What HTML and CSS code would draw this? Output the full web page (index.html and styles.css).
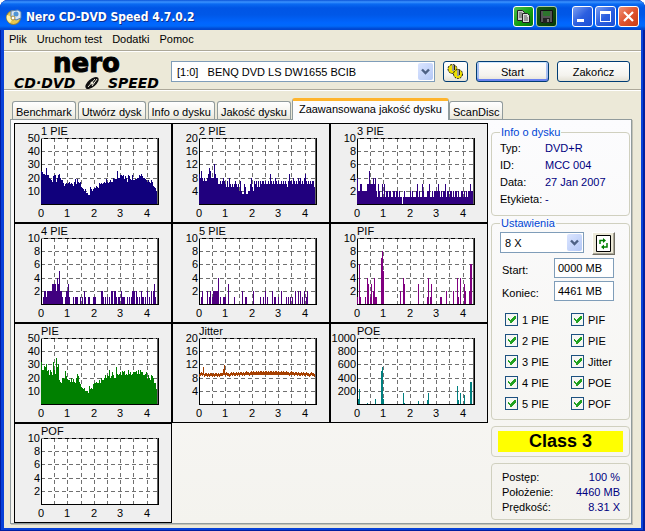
FILE: index.html
```html
<!DOCTYPE html>
<html lang="pl">
<head>
<meta charset="utf-8">
<title>Nero CD-DVD Speed 4.7.0.2</title>
<link rel="stylesheet" href="styles.css">
</head>
<body>
<div class="window">
  <header class="titlebar">
    <svg class="app-icon" width="16" height="16" viewBox="0 0 16 16" aria-hidden="true">
      <circle cx="7.5" cy="8.5" r="7" fill="#e9c94d" stroke="#8b7a35"/>
      <path d="M7.500 8.500L1 6a7 7 0 0 0 3 8z" fill="#fff3a8"/>
      <path d="M5 2l7-1 3 2v6l-5 2-5-3z" fill="#dbe7f2" stroke="#527fb5"/>
      <circle cx="10" cy="5" r="2.500" fill="#4f94d5"/>
      <circle cx="7" cy="9" r="2" fill="#fff" stroke="#a38833"/>
    </svg>
    <h1 class="title">Nero CD-DVD Speed 4.7.0.2</h1>
    <div class="caption-group">
      <button class="caption green" aria-label="Kopiuj"><svg width="19" height="19" viewBox="0 0 19 19"><path d="M3.500 3.500h5l2 2v8h-7z" fill="#c8c8c8" stroke="#222"/><path d="M5 6h3M5 8h3M5 10h3" stroke="#555"/><path d="M8.500 6.500h5l2 2v7h-7z" fill="#ddd" stroke="#222"/><path d="M10 9h3M10 11h4M10 13h4" stroke="#555"/></svg></button>
      <button class="caption green dark" aria-label="Zapisz"><svg width="19" height="19" viewBox="0 0 19 19"><path d="M3.500 3.500h12v12h-11l-1-1z" fill="#555" stroke="#111"/><path d="M6 4h7v5H6z" fill="#2d742d"/><path d="M6 11h7v5H6z" fill="#222"/><path d="M10 12h2v3h-2z" fill="#777"/></svg></button>
    </div>
    <div class="caption-group">
      <button class="caption" aria-label="Minimalizuj"><svg width="19" height="19" viewBox="0 0 19 19"><path d="M4 12h7v3H4z" fill="#fff"/></svg></button>
      <button class="caption" aria-label="Maksymalizuj"><svg width="19" height="19" viewBox="0 0 19 19"><path d="M4 4h11v11H4zM5 7v7h9V7z" fill="#fff" fill-rule="evenodd"/></svg></button>
      <button class="caption close" aria-label="Zamknij"><svg width="19" height="19" viewBox="0 0 19 19"><path d="M5 5l9 9M14 5l-9 9" stroke="#fff" stroke-width="2.200"/></svg></button>
    </div>
  </header>

  <div class="client">
    <nav class="menu">
      <a href="#plik">Plik</a><a href="#test">Uruchom test</a><a href="#dodatki">Dodatki</a><a href="#pomoc">Pomoc</a>
    </nav>

    <div class="toolbar">
      <div class="logo">
        <span class="logo-name">nero</span>
        <span class="logo-product"><span>CD·DVD</span>
          <svg width="18" height="12" viewBox="0 0 18 12" aria-hidden="true"><ellipse cx="9" cy="6" rx="8" ry="4" transform="rotate(-40 9 6)" fill="#111"/><path d="M5 10L12 2M9 9l5-7" stroke="#ece9d8"/><circle cx="9" cy="6" r="1.500" fill="#ece9d8"/></svg>
          <span>SPEED</span></span>
      </div>
      <div class="combo drive">
        <select aria-label="Napęd"><option>[1:0] &nbsp; BENQ DVD LS DW1655 BCIB</option></select>
        <svg class="arrow" viewBox="0 0 15 17" aria-hidden="true"><path d="M4 6.500l3.500 3.500L11 6.500" fill="none" stroke="#4d6185" stroke-width="2.400"/></svg>
      </div>
      <button class="push icon" aria-label="Opcje"><svg width="17" height="17" viewBox="0 0 17 17"><circle cx="5.500" cy="6" r="4.500" fill="#eee000" stroke="#111" stroke-dasharray="2 1"/><circle cx="11" cy="11" r="4.500" fill="#eee000" stroke="#111" stroke-dasharray="2 1"/><path d="M6 2v6M11 7v6" stroke="#999" stroke-width="2"/><path d="M7.500 2v5M12.500 7v5" stroke="#222"/></svg></button>
      <button class="push default">Start</button>
      <button class="push">Zakończ</button>
    </div>

    <div class="tabs" role="tablist">
      <button class="tab" role="tab">Benchmark</button>
      <button class="tab" role="tab">Utwórz dysk</button>
      <button class="tab" role="tab">Info o dysku</button>
      <button class="tab" role="tab">Jakość dysku</button>
      <button class="tab active" role="tab" aria-selected="true">Zaawansowana jakość dysku</button>
      <button class="tab" role="tab">ScanDisc</button>
    </div>

    <main class="panel">
      <div class="charts" id="charts"></div>
      <aside class="side">
        <fieldset class="group info">
          <legend>Info o dysku</legend>
          <dl>
            <dt>Typ:</dt><dd>DVD+R</dd>
            <dt>ID:</dt><dd>MCC 004</dd>
            <dt>Data:</dt><dd>27 Jan 2007</dd>
            <dt>Etykieta:</dt><dd>-</dd>
          </dl>
        </fieldset>
        <fieldset class="group settings">
          <legend>Ustawienia</legend>
          <div class="speed-row">
            <div class="combo speed">
              <select aria-label="Prędkość"><option>8 X</option></select>
              <svg class="arrow" viewBox="0 0 15 17" aria-hidden="true"><path d="M4 6.500l3.500 3.500L11 6.500" fill="none" stroke="#4d6185" stroke-width="2.400"/></svg>
            </div>
            <button class="refresh" aria-label="Odśwież"><svg width="15" height="17" viewBox="0 0 15 17"><path d="M.5.5h14v16H.5z" fill="#fff" stroke="#000"/><path d="M4 9V5.500h3M11 8v4H8" fill="none" stroke="#008000" stroke-width="1.500"/><path d="M7 3l3 2.500L7 8zM8 9.500L5 12l3 2.500z" fill="#008000"/></svg></button>
          </div>
          <div class="range">
            <label for="from">Start:</label><input id="from" type="text" value="0000 MB">
            <label for="to">Koniec:</label><input id="to" type="text" value="4461 MB">
          </div>
          <div class="checks">
            <label><input type="checkbox" checked>1 PIE</label><label><input type="checkbox" checked>PIF</label>
            <label><input type="checkbox" checked>2 PIE</label><label><input type="checkbox" checked>PIE</label>
            <label><input type="checkbox" checked>3 PIE</label><label><input type="checkbox" checked>Jitter</label>
            <label><input type="checkbox" checked>4 PIE</label><label><input type="checkbox" checked>POE</label>
            <label><input type="checkbox" checked>5 PIE</label><label><input type="checkbox" checked>POF</label>
          </div>
        </fieldset>
        <div class="group grade"><strong>Class 3</strong></div>
        <dl class="group status">
          <dt>Postęp:</dt><dd>100 %</dd>
          <dt>Położenie:</dt><dd>4460 MB</dd>
          <dt>Prędkość:</dt><dd>8.31 X</dd>
        </dl>
      </aside>
    </main>
  </div>
</div>
<script src="charts.js"></script>
</body>
</html>
```
FILE: styles.css
```css
* { box-sizing: border-box; }

body {
  margin: 0;
  background: #fff;
  color: #000;
  font: 11px/14px "Liberation Sans", Arial, sans-serif;
}

button, select, input { font: inherit; color: inherit; margin: 0; }
dl, dd, h1 { margin: 0; }

.window {
  display: flex;
  flex-direction: column;
  min-height: 100vh;
  padding: 0 4px 4px;
  border-radius: 8px 8px 0 0;
  background: #0842d8;
  box-shadow: inset 1px 0 #001ea0, inset -2px 0 #001ea0, inset 0 -2px #001ea0;
}

.titlebar {
  display: flex;
  align-items: center;
  gap: 12px;
  height: 30px;
  margin: 0 -4px;
  padding: 3px 6px 0;
  border-radius: 8px 8px 0 0;
  background: linear-gradient(#0a53d8 0, #3b93ff 2px, #0a6af2 4px, #0055e5 8px, #0058e8 15px, #0066ff 23px, #0069fa 26px, #0046cf 29px);
}

.app-icon { margin-right: -8px; }

.title {
  flex: 1;
  color: #fff;
  font: bold 12px/20px "DejaVu Sans Condensed", "Open Sans", sans-serif;
  text-shadow: 1px 1px #0b2f90;
  white-space: nowrap;
}

.caption-group { display: flex; gap: 2px; margin-left: 3px; }

.caption {
  width: 21px;
  height: 21px;
  padding: 0;
  border: 1px solid #fff;
  border-radius: 3px;
  background: linear-gradient(135deg, #7c9ff0, #2c5fe0 50%, #1b50d5);
}
.caption svg { display: block; }
.caption.green { background: linear-gradient(135deg, #4fc04f, #109c10 60%, #087808); }
.caption.green.dark { border-color: #a8c8a8; background: linear-gradient(135deg, #155c15, #053905); }
.caption.close { background: linear-gradient(135deg, #ef9277, #e0532f 50%, #c83d14); }

.client {
  flex: 1;
  display: flex;
  flex-direction: column;
  background: #ece9d8;
}

.menu {
  display: flex;
  gap: 10px;
  height: 21px;
  padding: 2px 5px 0;
  border-bottom: 1px solid #aca899;
}
.menu a { color: #000; text-decoration: none; }

.toolbar {
  display: flex;
  align-items: center;
  gap: 8px;
  height: 39px;
  padding: 2px 11px 0 10px;
  border-top: 1px solid #fff;
  border-bottom: 1px solid #aca899;
  box-shadow: 0 1px #fff;
}

.logo { width: 145px; margin-right: 4px; color: #000; }
.logo-name {
  display: block;
  height: 23px;
  text-align: center;
  font: bold 26px/18px "DejaVu Sans", sans-serif;
  -webkit-text-stroke: 1px #000;
}
.logo-product {
  display: flex;
  align-items: center;
  justify-content: space-between;
  font: italic bold 14px/12px "DejaVu Sans", sans-serif;
}

.combo {
  position: relative;
  display: flex;
  height: 21px;
  border: 1px solid #7f9db9;
  background: #fff;
}
.combo.drive { flex: 1; }
.combo.speed { width: 84px; }
.combo select {
  appearance: none;
  flex: 1;
  min-width: 0;
  padding: 0 20px 0 5px;
  border: 0;
  background: transparent;
}
.combo.speed select { padding-left: 4px; }
.arrow {
  position: absolute;
  top: 1px;
  right: 1px;
  width: 15px;
  height: 17px;
  border-radius: 2px;
  background: linear-gradient(135deg, #dbe5ff, #b4c8f6);
  pointer-events: none;
}

.push {
  width: 73px;
  height: 21px;
  padding: 0;
  border: 1px solid #003c74;
  border-radius: 3px;
  background: linear-gradient(#fff, #f4f3ee 70%, #e4e1d5);
}
.push.default { box-shadow: inset 0 1px #cee7ff, inset 0 -2px #6982ee, inset 2px 0 #a7bff1, inset -2px 0 #a7bff1; }
.push.icon { width: 25px; }
.push.icon svg { display: block; margin: 0 auto; }

.tabs {
  display: flex;
  align-items: flex-end;
  gap: 2px;
  height: 29px;
  padding: 0 8px;
}
.tab {
  height: 18px;
  padding: 2px 3px 0;
  border: 1px solid #919b9c;
  border-bottom: 0;
  border-radius: 3px 3px 0 0;
  background: linear-gradient(#fff, #f2f1ea 70%, #e6e3d6);
  line-height: 14px;
  white-space: nowrap;
}
.tab.active {
  position: relative;
  height: 22px;
  margin: 0 -2px -1px -1px;
  padding: 0 6px 4px;
  border-top: 3px solid #ffb42c;
  background: #fcfcfe;
}

.panel {
  flex: 1;
  display: flex;
  gap: 3px;
  margin: 0 9px 4px 6px;
  padding: 3px 1px 0 3px;
  border: 1px solid #919b9c;
  box-shadow: 1px 1px #c4c2b6;
  background: linear-gradient(#fcfcfe, #f4f3ee);
}

.charts {
  flex: 1;
  display: grid;
  grid-template-columns: repeat(3, 158px);
  align-content: start;
}
.chart { display: block; width: 158px; height: 100px; border: 1px solid #000; background: #efefef; }
.chart text { font: 11px "Liberation Sans", Arial, sans-serif; }
.chart .tick { text-anchor: end; }
.chart .unit { text-anchor: middle; }

.side { width: 140px; padding-top: 3px; }

.group {
  margin: 0;
  padding: 0 8px;
  border: 1px solid #d0d0bf;
  border-radius: 4px;
}
.group legend { padding: 0 1px; color: #0046d5; line-height: 12px; }

.info dl {
  display: grid;
  grid-template-columns: 45px 1fr;
  padding: 2px 0 7px;
  line-height: 17px;
}
.info dd, .status dd { color: #000080; }

.settings { margin-top: 1px; }
.speed-row { display: flex; gap: 8px; padding-top: 3px; }
.refresh {
  width: 23px;
  height: 23px;
  padding: 2px 3px;
  border: 1px solid;
  border-color: #fff #716f64 #716f64 #fff;
  background: #ece9d8;
  box-shadow: inset -1px -1px #aca899;
}
.refresh svg { display: block; }

.range {
  display: grid;
  grid-template-columns: 52px 60px;
  row-gap: 3px;
  align-items: center;
  padding: 3px 0 0 2px;
}
.range label { padding-top: 4px; }
.range input {
  width: 60px;
  height: 20px;
  padding: 0 3px;
  border: 1px solid #7f9db9;
  background: #fff;
}

.checks {
  display: grid;
  grid-template-columns: 66px 1fr;
  padding: 8px 0 5px 5px;
}
.checks label { display: flex; align-items: center; gap: 4px; height: 21px; }
.checks input {
  appearance: none;
  width: 13px;
  height: 13px;
  border: 1px solid #1c5180;
  background: linear-gradient(135deg, #dcdcd7, #fff);
}
.checks input:checked {
  background:
    linear-gradient(45deg, transparent 35%, #21a121 35% 65%, transparent 65%) 2px 4px / 4px 5px no-repeat,
    linear-gradient(135deg, transparent 35%, #21a121 35% 65%, transparent 65%) 4px 2px / 6px 7px no-repeat,
    #f6f6f4;
}

.grade { margin-top: 6px; padding: 4px 6px; }
.grade strong {
  display: block;
  background: #ff0;
  font-size: 18px;
  line-height: 21px;
  text-align: center;
}

.status {
  display: grid;
  grid-template-columns: 1fr auto;
  margin-top: 6px;
  padding: 6px 9px 4px 10px;
  line-height: 15px;
}
.status dd { text-align: right; }
```
FILE: charts.js
```js
// Plot geometry inside a 156x98 chart; one sample is one pixel wide.
const LEFT = 26, TOP = 14, WIDTH = 118, HEIGHT = 66, STEP = 13.2, END = 116;

const parse = s => s.trim().split(/\s+/).map(Number);

// Expands [position, value, width] entries over an empty baseline.
const sparse = list => {
  const out = new Array(END).fill(0);
  list.forEach(([x, v, w = 1]) => out.fill(v, x, x + w));
  return out;
};

const pie1 = parse(`25 24 23 23 22 27 22 22 20 19 18 17 21 22 22 17 20 22 23 20
 18 18 16 14 15 16 15 16 17 15 16 15 14 17 19 15 19 17 16 17 13 12 11 10 11 8 8 7
 7 13 11 10 11 12 12 14 13 12 16 15 16 15 16 17 16 19 17 16 17 18 17 17 20 19 19 19 25
 20 20 22 22 21 22 19 21 20 17 22 21 19 18 22 18 18 19 19 20 20 22 21 23 21 20 20 19
 18 17 18 17 16 18 17 14 13 12 10`);
const pie2 = parse(`9 8 10 8 7 8 7 7 8 9 11 10 8 8 8 12 9 8 8 6 6 7 6 7 8 7 6 5
 7 5 8 6 5 6 5 6 7 6 5 6 4 7 4 3 3 6 5 3 3 4 4 6 8 5 4 7 6 7 5 7 5 7
 6 7 7 6 7 6 6 7 6 9 7 6 7 6 8 7 6 7 6 6 7 6 7 6 7 6 5 7 9 7
 7 6 8 7 6 7 6 8 7 8 6 7 6 8 9 7 6 7 6 7 6 7 7 5 5`);
const pie3 = parse(`4 2 2 3 3 2 2 2 2 2 3 3 5 3 3 3 4 3 4 2 1 3 2 1 1 3 1 3
 1 2 2 1 2 2 1 1 2 2 1 2 2 1 2 1 1 0 1 2 1 1 1 1 1 2 1 2 1 1 1 2 3 1 2
 1 1 3 2 1 1 1 2 2 3 1 1 2 1 2 2 2 2 3 2 1 2 1 2 2 3 1 2 2 1 2 2 1 2 1
 2 2 1 2 1 1 2 2 1 2 1 2 1 2 2 3 2 2`);
const pie = parse(`32 26 26 29 28 30 25 26 22 26 24 22 32 26 23 35 28 30 18 17
 16 20 20 19 25 21 19 18 18 17 20 17 19 17 16 20 23 21 17 15 13 12 11 12 10 10 10 8
 14 11 12 11 15 16 16 17 16 16 18 16 20 18 18 20 22 20 22 21 26 20 21 24 22 20 20 28 23
 22 23 24 22 25 24 25 22 23 22 26 23 24 22 23 24 24 24 25 23 26 23 26 24 24 22 22 23
 24 19 22 20 18 22 21 20 16 16 11`);
const pie4 = sparse([[2,1],[3,2,2],[5,1],[6,2,6],[11,3,4],[15,2],[16,4],[17,3],[18,5],[19,2,2],
 [21,1],[24,1],[25,2,2],[27,3],[28,1],[32,1],[34,1,3],[39,1],[41,1],[43,2],[44,1],[47,1,2],
 [52,1,3],[60,2,2],[62,1],[64,1],[66,1],[68,1],[70,2,2],[73,2,2],[75,1],[77,1,2],[80,2],
 [81,1,3],[86,1],[88,1],[90,1],[91,2,2],[93,2],[95,2],[96,1],[98,1],[100,2],[101,1,2],[104,1],
 [106,2],[108,1],[110,2],[112,2],[113,3],[114,1]]);
const pie5 = sparse([[2,1],[3,2],[8,2],[10,1],[11,2],[13,1],[14,2,5],[19,4],[21,1],[24,1,3],
 [29,3],[35,1],[43,2],[46,1,2],[54,2],[61,1],[64,1],[66,2],[68,1],[73,2],[75,1],[76,1],[79,1],
 [82,2],[87,1],[89,1],[91,1],[93,1],[96,2],[99,2],[101,2],[103,1],[105,2],[107,1],[108,2]]);
const pif = sparse([[0,1],[2,6],[3,1],[8,1],[10,4],[11,3],[13,1],[14,3],[16,2],[17,4],[18,1,2],
 [24,7],[25,8],[26,5],[43,2],[46,4],[47,3],[61,3],[70,1],[71,4],[73,1],[74,3],[83,1,2],[89,2],
 [96,2],[100,4],[101,1],[103,4],[107,3],[108,2],[112,2],[113,6,2]]);
const poe = sparse([[1,80],[2,220],[10,20],[18,80],[24,500],[25,560],[26,80],[46,160],[47,20],
 [61,50],[70,60],[71,160],[100,270],[101,60],[103,160],[107,130],[113,330],[114,340]]);

const jitter = Array.from({ length: END }, (_, i) => {
  if (i === 4) return 11.2;
  if (i === 24) return 10.5;
  if (i === 25) return 11.8;
  return 9.6 + 0.3 * Math.sin(i / 18 + 4) + ((i * 7) % 5 - 2) * 0.1;
});

const charts = [
  { name: '1 PIE', max: 50, color: '#10007c', data: pie1 },
  { name: '2 PIE', max: 20, color: '#20007e', data: pie2 },
  { name: '3 PIE', max: 10, color: '#300080', data: pie3 },
  { name: '4 PIE', max: 10, color: '#400080', data: pie4 },
  { name: '5 PIE', max: 10, color: '#500080', data: pie5 },
  { name: 'PIF', max: 10, color: '#800080', data: pif },
  { name: 'PIE', max: 50, color: '#008000', data: pie },
  { name: 'Jitter', max: 20, color: '#a64000', data: jitter, line: true },
  { name: 'POE', max: 1000, color: '#008080', data: poe },
  { name: 'POF', max: 10, color: '#000', data: [] }
];

function draw({ name, max, color, data, line }) {
  const bottom = TOP + HEIGHT;
  const y = v => bottom - Math.round(v / max * HEIGHT);
  let grid = '', text = `<text x="${LEFT}" y="11">${name}</text>`;
  for (let i = 0; i < 5; i++) {
    const gy = TOP + Math.round(i * STEP);
    if (i) grid += `M${LEFT} ${gy}.5H${LEFT + WIDTH - 2}`;
    text += `<text class="tick" x="${LEFT - 1}" y="${gy + 4}">${max - i * max / 5}</text>`;
  }
  for (let k = 0; k < 9; k++) {
    const gx = LEFT + Math.round(k * STEP);
    if (k) grid += `M${gx}.5 ${TOP}V${bottom + 3}`;
    if (k % 2 === 0) text += `<text class="unit" x="${gx}" y="93">${k / 2}</text>`;
  }
  const bars = data.slice(0, END).map((v, i) => {
    if (!v) return '';
    const top = y(v);
    return `M${LEFT + i} ${top}h1V${line ? Math.max(top + 3, y(8.9)) : bottom}h-1z`;
  }).join('');
  return `<svg class="chart" viewBox="0 0 156 98" role="img" aria-label="${name}">
    <g shape-rendering="crispEdges" fill="none">
      <path d="M${LEFT} ${TOP}h${WIDTH}v${HEIGHT}h-${WIDTH}z" fill="#fff"/>
      <path d="${grid}" stroke="#707070" stroke-dasharray="4 3"/>
      <path d="M${LEFT}.5 ${TOP}.5h${WIDTH - 1}v${HEIGHT}h-${WIDTH - 1}z" stroke="#000"/>
      <path d="M${LEFT} ${TOP}.5h${WIDTH}" stroke="#888" stroke-dasharray="3 4"/>
      <path d="${bars}" fill="${color}"/>
      <path d="M${LEFT + END}.5 ${TOP}v${HEIGHT}" stroke="#606060"/>
    </g>${text}</svg>`;
}

document.getElementById('charts').innerHTML = charts.map(draw).join('');
```
